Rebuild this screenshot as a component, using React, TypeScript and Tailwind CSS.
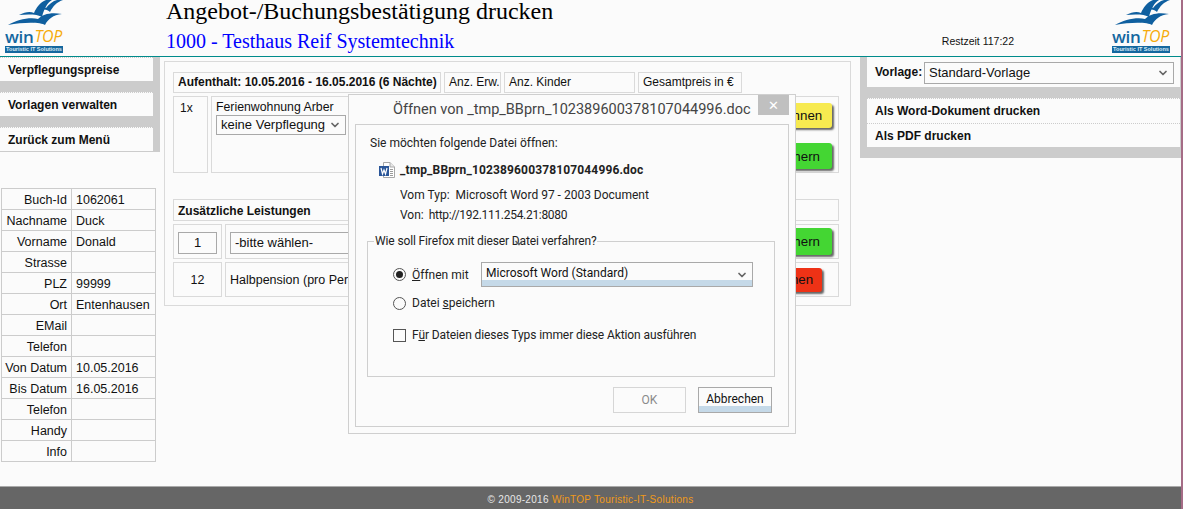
import { ChevronDown } from 'lucide-react';

const pageFont = { fontFamily: '"Liberation Sans", Arial, sans-serif' };
const dialogFont = { fontFamily: 'Roboto, "Noto Sans", sans-serif' };

const guestRows = [
  ['Buch-Id', '1062061'],
  ['Nachname', 'Duck'],
  ['Vorname', 'Donald'],
  ['Strasse', ''],
  ['PLZ', '99999'],
  ['Ort', 'Entenhausen'],
  ['EMail', ''],
  ['Telefon', ''],
  ['Von Datum', '10.05.2016'],
  ['Bis Datum', '16.05.2016'],
  ['Telefon', ''],
  ['Handy', ''],
  ['Info', ''],
];

function Logo() {
  return (
    <div className="flex h-[56px] w-[58px] flex-col overflow-hidden">
      <svg viewBox="0 0 58 25" className="h-[25px] w-[58px] fill-[#0f5f9f]">
        <path d="M3 25 C12 20 24 17 33 19 C38 14 46 12 57 14 C48 15 43 19 40 25 C36 22 18 22 3 25 Z" />
        <path d="M14 15 C20 12 25 11 29 13 C31 8 35 2 41 0 L47 0 C42 3 39 9 37 17 C33 14 22 14 14 15 Z" />
        <path d="M32 9 C35 7 38 6 41 8 C44 4 48 1 52 0 L58 0 C52 2 48 6 45 12 C42 9 37 9 32 9 Z" />
      </svg>
      <div className="mt-px flex h-[20px] items-center leading-none" style={{ fontFamily: '"Open Sans", sans-serif' }}>
        <span className="text-[17px] font-semibold tracking-[-0.3px] text-[#14679f]">win</span>
        <span className="ml-px text-[16px] font-normal italic tracking-[-0.4px] text-[#f6ab0c]">TOP</span>
      </div>
      <div className="flex h-[7px] items-center justify-center overflow-hidden whitespace-nowrap bg-[#14679f] text-[5.500px] font-bold leading-none text-[#dcebf5]">
        Touristic IT Solutions
      </div>
    </div>
  );
}

function SelectBox({ value, className, accent }: { value: string; className: string; accent?: boolean }) {
  return (
    <div className={`relative flex items-center border border-[#a9a9a9] bg-[#fbfbfb] pl-[4px] text-[#111] ${className}`}>
      <span className="relative z-10 whitespace-nowrap">{value}</span>
      <ChevronDown size={12} strokeWidth={3.5} className="absolute right-[4px] top-1/2 z-10 -translate-y-1/2 text-[#666]" />
      {accent && <div className="absolute inset-x-0 bottom-0 h-[6px] bg-[#c5d9e8]" />}
    </div>
  );
}

function NavItem({ label }: { label: string }) {
  return (
    <div className="flex h-[24px] items-center border-t border-dotted border-[#cccccc] bg-[#fbfbfb] pl-[8px] text-[12px] font-bold text-[#111]">
      {label}
    </div>
  );
}

function ActionButton({ label, className }: { label: string; className: string }) {
  return (
    <div className={`flex items-center justify-center rounded-[3px] text-[13.333px] text-[#111] shadow-[2px_2px_2px_#666666] ${className}`}>
      {label}
    </div>
  );
}

function Cell({ className, children }: { className: string; children?: React.ReactNode }) {
  return <div className={`border border-[#dadada] ${className}`}>{children}</div>;
}

function WordIcon() {
  return (
    <svg viewBox="0 0 16 16" className="h-[16px] w-[16px]">
      <path d="M4.500 0.500 H11 L15.500 5 V15.500 H4.500 Z" fill="#fff" stroke="#a8a8a8" />
      <path d="M11 0.500 V5 H15.500" fill="#e8e8e8" stroke="#a8a8a8" />
      <path d="M11 7.500 H14 M11 9.500 H14 M11 11.500 H14 M11 13.500 H14" stroke="#9a9a9a" />
      <rect x="0" y="4" width="10" height="10" fill="#2a5699" />
      <path d="M2 6 L3.500 12 L5 8 L6.500 12 L8 6" fill="none" stroke="#fff" strokeWidth="1.200" />
    </svg>
  );
}

function Radio({ checked }: { checked?: boolean }) {
  return (
    <span className="flex h-[13px] w-[13px] items-center justify-center rounded-full border border-[#555]">
      {checked && <span className="h-[7px] w-[7px] rounded-full bg-[#222]" />}
    </span>
  );
}

function OpenDialog() {
  return (
    <div
      className="absolute left-[348px] top-[94px] flex h-[340px] w-[448px] flex-col border border-[#cfcfcf] bg-[#fbfbfb] px-[6px] pb-[6px] text-[12px] leading-[16px] text-[#222]"
      style={dialogFont}
    >
      <div className="flex h-[29px] flex-none items-start justify-between">
        <div className="ml-[38px] mt-[5px] whitespace-nowrap text-[14.500px] leading-[20px] text-[#444]">
          Öffnen von _tmp_BBprn_102389600378107044996.doc
        </div>
        <div className="flex h-[20px] w-[31px] items-center justify-center bg-[#c0c0c0] text-[13px] leading-none text-white">
          ✕
        </div>
      </div>
      <div className="flex flex-1 flex-col border border-[#cfcfcf] pl-[11px] pr-[13px]">
        <div className="ml-[3px] mt-[10px]">Sie möchten folgende Datei öffnen:</div>
        <div className="ml-[12px] mt-[11px] flex items-center gap-[5px]">
          <WordIcon />
          <span className="font-bold tracking-[0.14px]">_tmp_BBprn_102389600378107044996.doc</span>
        </div>
        <div className="ml-[33px] mt-[9px] flex gap-[6px]">
          <span>Vom Typ:</span>
          <span>Microsoft Word 97 - 2003 Document</span>
        </div>
        <div className="ml-[33px] mt-[4px] flex gap-[5px]">
          <span>Von:</span>
          <span className="tracking-[-0.3px]">http://192.111.254.21:8080</span>
        </div>
        <div className="relative mt-[18px] h-[136px] w-[408px] border border-[#cfcfcf] pl-[25px] pt-[20px]">
          <div className="absolute left-[6px] top-[-9px] bg-[#fbfbfb] px-[1px] tracking-[-0.13px]">
            Wie soll Firefox mit dieser Datei verfahren?
          </div>
          <div className="flex items-center">
            <Radio checked />
            <span className="ml-[6px] w-[69px]"><u>Ö</u>ffnen mit</span>
            <SelectBox value="Microsoft Word (Standard)" accent className="h-[25px] w-[272px] pb-[3px]" />
          </div>
          <div className="mt-[8px] flex items-center">
            <Radio />
            <span className="ml-[6px]">Datei <u>s</u>peichern</span>
          </div>
          <div className="mt-[16px] flex items-center">
            <span className="h-[13px] w-[13px] border border-[#555]" />
            <span className="ml-[6px] tracking-[-0.1px]">F<u>ü</u>r Dateien dieses Typs immer diese Aktion ausführen</span>
          </div>
        </div>
        <div className="mr-[3px] mt-[10px] flex justify-end gap-[12px]">
          <div className="flex h-[26px] w-[73px] items-center justify-center border border-[#d6d6d6] text-[#8a8a8a]">OK</div>
          <div className="relative flex h-[26px] w-[74px] items-center justify-center border border-[#a9a9a9] pb-[2px] text-[#111]">
            <span className="relative z-10">Abbrechen</span>
            <div className="absolute inset-x-0 bottom-0 h-[6px] bg-[#c5d9e8]" />
          </div>
        </div>
      </div>
    </div>
  );
}

export default function App() {
  return (
    <div className="relative flex h-screen w-full bg-[#fbfbfb] text-[12px] text-[#111]" style={pageFont}>
      <div className="flex min-w-0 flex-1 flex-col">
        <header className="flex h-[57px] flex-none border-b border-[#008b8b] pl-[5px] pr-[11px]">
          <Logo />
          <div className="ml-[103px] flex-1" style={{ fontFamily: '"Liberation Serif", "Times New Roman", serif' }}>
            <div className="mt-[-4px] text-[24px] leading-[30px] text-black">Angebot-/Buchungsbestätigung drucken</div>
            <div className="mt-[3px] text-[20px] leading-[24px] text-[#0000ff]">1000 - Testhaus Reif Systemtechnik</div>
          </div>
          <div className="mb-[9px] mr-[98px] self-end text-[10.500px] leading-[12px] text-[#111]">Restzeit 117:22</div>
          <Logo />
        </header>

        <div className="flex min-h-0 flex-1">
          <aside className="w-[160px] flex-none">
            <div className="border-b border-[#cccccc] border-r-[7px] border-r-[#cccccc] bg-[#cccccc]">
              <NavItem label="Verpflegungspreise" />
              <div className="h-[11px]" />
              <NavItem label="Vorlagen verwalten" />
              <div className="h-[11px]" />
              <NavItem label="Zurück zum Menü" />
            </div>
            <div className="ml-[1px] mt-[36px] w-[155px] border-l border-t border-[#cccccc]">
              {guestRows.map(([label, value], i) => (
                <div key={i} className="flex h-[21px] border-b border-r border-[#cccccc] text-[12.500px] leading-[22px]">
                  <div className="w-[70px] flex-none border-r border-[#cccccc] pr-[4px] text-right">{label}</div>
                  <div className="pl-[4px]">{value}</div>
                </div>
              ))}
            </div>
          </aside>

          <main className="ml-[4px] mt-[4px] flex h-[245px] w-[687px] flex-none flex-col gap-[3px] border border-[#dadada] pl-[8px] pr-[11px] pt-[10px]">
            <div className="flex gap-[3px] leading-[19px]">
              <Cell className="h-[21px] w-[268px] pl-[4px] font-bold">Aufenthalt: 10.05.2016 - 16.05.2016 (6 Nächte)</Cell>
              <Cell className="h-[21px] w-[57px] pl-[4px]">Anz. Erw.</Cell>
              <Cell className="h-[21px] w-[131px] pl-[4px]">Anz. Kinder</Cell>
              <Cell className="h-[21px] w-[104px] pl-[4px]">Gesamtpreis in €</Cell>
            </div>
            <div className="flex h-[77px] gap-[3px]">
              <Cell className="w-[35px] pl-[6px] pt-[2px]">1x</Cell>
              <Cell className="w-[524px] pl-[4px] pt-[3px]">
                <div className="text-[12.300px] leading-[14px]">Ferienwohnung Arber</div>
                <SelectBox value="keine Verpflegung" className="mt-px h-[20px] w-[130px] text-[13px]" />
              </Cell>
              <Cell className="flex flex-1 flex-col pt-[6px]">
                <ActionButton label="Berechnen" className="ml-[5px] h-[25px] w-[88px] bg-[#f7ea50] pl-[4px]" />
                <ActionButton label="Speichern" className="ml-[5px] mt-[15px] h-[26px] w-[88px] bg-[#44d633] pl-[4px] pt-px" />
              </Cell>
            </div>
            <Cell className="mt-[23px] h-[22px] flex-none pl-[4px] font-bold leading-[22px]">Zusätzliche Leistungen</Cell>
            <div className="flex h-[35px] gap-[3px]">
              <Cell className="flex w-[49px] items-center justify-center pt-[3px]">
                <div className="flex h-[22px] w-[39px] items-center justify-center border border-[#a9a9a9] text-[13px]">1</div>
              </Cell>
              <Cell className="flex w-[510px] items-center pl-[4px] pt-[3px]">
                <SelectBox value="-bitte wählen-" className="h-[22px] w-[300px] text-[13px]" />
              </Cell>
              <Cell className="flex flex-1 items-center">
                <ActionButton label="Speichern" className="ml-[5px] h-[27px] w-[88px] bg-[#44d633] pl-[4px]" />
              </Cell>
            </div>
            <div className="flex h-[35px] gap-[3px]">
              <Cell className="flex w-[49px] items-center justify-center pt-px text-[12.500px]">12</Cell>
              <Cell className="flex w-[510px] items-center pl-[4px] pt-px text-[12.500px]">Halbpension (pro Person)</Cell>
              <Cell className="flex flex-1 items-center">
                <ActionButton label="Löschen" className="ml-[15px] h-[24px] w-[68px] bg-[#ee3216]" />
              </Cell>
            </div>
          </main>

          <aside className="ml-[9px] flex h-[101px] flex-1 flex-col bg-[#cccccc] pl-[7px] pr-[1px]">
            <div className="flex h-[30px] flex-none items-center bg-[#fbfbfb] pl-[8px] font-bold">
              <span className="w-[49px]">Vorlage:</span>
              <SelectBox value="Standard-Vorlage" className="mt-[2px] h-[22px] w-[250px] text-[13px] font-normal" />
            </div>
            <div className="mt-[11px]">
              <NavItem label="Als Word-Dokument drucken" />
              <div className="h-px bg-[#fbfbfb]" />
              <NavItem label="Als PDF drucken" />
            </div>
          </aside>
        </div>

        <footer className="flex h-[23px] flex-none items-center justify-center border-t border-[#aaaaaa] bg-[#666666] pt-[2px] text-[10px] tracking-[0.3px] text-[#e8e8e8]">
          © 2009-2016&nbsp;<span className="text-[#f09a1a]">WinTOP Touristic-IT-Solutions</span>
        </footer>
      </div>
      <div className="w-[2px] flex-none bg-[#a56c86]" />
      <OpenDialog />
    </div>
  );
}
